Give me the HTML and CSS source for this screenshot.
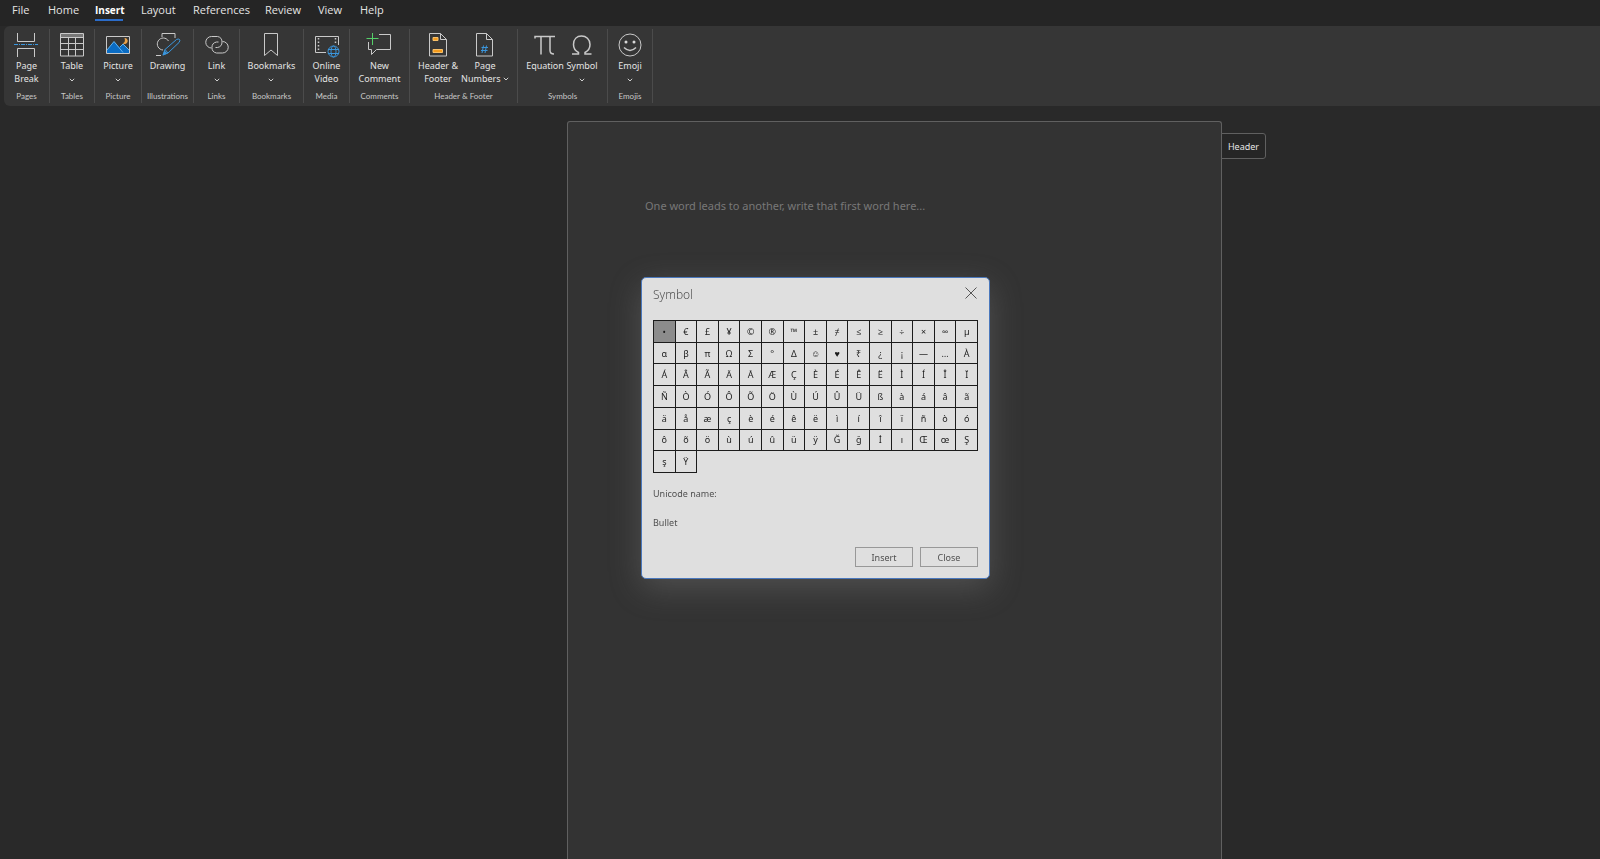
FILE: index.html
```html
<!DOCTYPE html>
<html lang="en">
<head>
<meta charset="utf-8">
<title>Document editor</title>
<link rel="stylesheet" href="styles.css">
</head>
<body>
<div class="app">
  <nav class="menu" aria-label="Main menu">
    <button class="menu-item menu-file">File</button>
    <button class="menu-item menu-home">Home</button>
    <button class="menu-item menu-insert active">Insert</button>
    <button class="menu-item menu-layout">Layout</button>
    <button class="menu-item menu-refs">References</button>
    <button class="menu-item menu-review">Review</button>
    <button class="menu-item menu-view">View</button>
    <button class="menu-item menu-help">Help</button>
  </nav>

  <div class="ribbon" role="toolbar" aria-label="Insert">
    <section class="group g-45">
      <div class="tools"><button class="tool">
        <svg class="icon" viewBox="0 0 24 24"><path d="M3.500 0v8.500h17V0M3.500 24v-8.500h17V24"/><path class="blue" stroke-dasharray="4 1 1 1" d="M0 11.500h24"/></svg>
        <span>Page<br>Break</span></button></div>
      <h2 class="caption">Pages</h2>
    </section>
    <section class="group g-44">
      <div class="tools"><button class="tool">
        <svg class="icon" viewBox="0 0 24 24"><path d="M.5.500h23v22.500H.5zM.5 4.500h23M.5 10.500h23M.5 16.500h23M8.500 4.500v18.500M15.500 4.500v18.500"/><path class="dim" d="M1 2.500h22"/></svg>
        <span>Table</span><svg class="chev" viewBox="0 0 6 4"><path d="M.8.800 3 3 5.200.800"/></svg></button></div>
      <h2 class="caption">Tables</h2>
    </section>
    <section class="group g-46">
      <div class="tools"><button class="tool">
        <svg class="icon" viewBox="0 0 24 24"><path class="fill-blue" d="M1 17 8 8.500l5.500 6L17 11l6 6v3H1z"/><path class="sky" d="M1 17 8 8.500l9 11M14 14l3-3 6 6"/><path d="M.5 3.500h23v17H.5z"/><path class="fill-orange" d="M18.500 5a3 3 0 1 1-2 5c2 0 3-2 2-5z"/></svg>
        <span>Picture</span><svg class="chev" viewBox="0 0 6 4"><path d="M.8.800 3 3 5.200.800"/></svg></button></div>
      <h2 class="caption">Picture</h2>
    </section>
    <section class="group g-51">
      <div class="tools"><button class="tool">
        <svg class="icon" viewBox="0 0 24 24"><path d="M6 4V.5h13V5M12.500 8A6 6 0 1 0 7 17M0 22.500h5"/><path class="blue" d="m7 22 2-5.500L20.500 6.500q2-1 3 0t-.5 3L12 20z M9 16.500l3 3.500"/><path class="fill-sky" d="m6.500 22.500 2-5 3 3z"/></svg>
        <span>Drawing</span></button></div>
      <h2 class="caption">Illustrations</h2>
    </section>
    <section class="group g-45">
      <div class="tools"><button class="tool">
        <svg class="icon" viewBox="0 0 24 24"><path d="M6.500 15A5.700 5.700 0 0 1 6.500 3.500h6a5.600 5.600 0 0 1 0 11H10.500"/><path d="M17.500 8.500a5.700 5.700 0 0 1 0 11.500h-6a5.600 5.600 0 0 1 0-11H13.500"/></svg>
        <span>Link</span><svg class="chev" viewBox="0 0 6 4"><path d="M.8.800 3 3 5.200.800"/></svg></button></div>
      <h2 class="caption">Links</h2>
    </section>
    <section class="group g-63">
      <div class="tools"><button class="tool">
        <svg class="icon" viewBox="0 0 24 24"><path d="M5.500.500h13v22L12 17l-6.500 5.500z"/></svg>
        <span>Bookmarks</span><svg class="chev" viewBox="0 0 6 4"><path d="M.8.800 3 3 5.200.800"/></svg></button></div>
      <h2 class="caption">Bookmarks</h2>
    </section>
    <section class="group g-45">
      <div class="tools"><button class="tool">
        <svg class="icon" viewBox="0 0 24 24"><path d="M11 19.500H.5v-16h23V12"/><path class="thick" stroke-dasharray="1.500 2" d="M3.500 5v14M20.500 5v6"/><circle class="disc" cx="18.500" cy="18.500" r="6.500"/><g class="blue"><circle cx="18.500" cy="18.500" r="5.500"/><ellipse cx="18.500" cy="18.500" rx="2.500" ry="5.500"/><path d="M13 16.500h11M13 20.500h11"/></g></svg>
        <span>Online<br>Video</span></button></div>
      <h2 class="caption">Media</h2>
    </section>
    <section class="group g-59">
      <div class="tools"><button class="tool">
        <svg class="icon" viewBox="0 0 24 24"><path d="M12 1.500h11.500v15H9.500L4.500 21.500v-5h-3V9"/><path class="green" d="M5.500 0v12M-.5 5.500H11.500"/></svg>
        <span>New<br>Comment</span></button></div>
      <h2 class="caption">Comments</h2>
    </section>
    <section class="group g-107">
      <div class="tools">
        <button class="tool t-48">
        <svg class="icon" viewBox="0 0 24 24"><path d="M3.500.500h11l6 6v16.500h-17zM14.500.500v6h6"/><path class="orange" d="M7 4.500h5v3H7zM7 16.500h9.500v3H7z"/></svg>
        <span>Header &amp;<br>Footer</span></button>
        <button class="tool t-46">
        <svg class="icon" viewBox="0 0 24 24"><path d="M3.500.500h10l6 6v16.500h-16zM13.500.500v6h6"/><path class="blue" d="M10.500 12.500l-1.500 7.500M13.500 12.500l-1.500 7.500M8.500 14.500h6.500M8 17.500h6.500"/></svg>
        <span>Page<br>Numbers <svg class="chev inline" viewBox="0 0 6 4"><path d="M.8.800 3 3 5.200.800"/></svg></span></button>
      </div>
      <h2 class="caption">Header &amp; Footer</h2>
    </section>
    <section class="group g-89">
      <div class="tools">
        <button class="tool t-39">
        <svg class="icon" viewBox="0 0 24 24"><path class="thick" d="M2 5.500V3.500h20M8 3.500v18M17 3.500v14q0 3.500 4 3.500"/></svg>
        <span>Equation</span></button>
        <button class="tool t-35">
        <svg class="icon" viewBox="0 0 24 24"><path class="thick" d="M2 21h6.500v-1.500Q3.500 17 3.500 11.500C3.500 6 7 3 11.500 3s8.500 3 8.500 8.500Q20 17 15 19.500V21h6.500"/></svg>
        <span>Symbol</span><svg class="chev" viewBox="0 0 6 4"><path d="M.8.800 3 3 5.200.800"/></svg></button>
      </div>
      <h2 class="caption">Symbols</h2>
    </section>
    <section class="group g-44">
      <div class="tools"><button class="tool">
        <svg class="icon" viewBox="0 0 24 24"><circle cx="12" cy="12" r="11"/><path class="thick" d="M6 14.500q6 6 12 0"/><circle class="eye" cx="8" cy="9" r="1.500"/><circle class="eye" cx="16" cy="9" r="1.500"/></svg>
        <span>Emoji</span><svg class="chev" viewBox="0 0 6 4"><path d="M.8.800 3 3 5.200.800"/></svg></button></div>
      <h2 class="caption">Emojis</h2>
    </section>
  </div>

  <main class="canvas">
    <article class="page">
      <p class="placeholder">One word leads to another, write that first word here...</p>
      <button class="header-tab">Header</button>
    </article>
  </main>
</div>

<div class="overlay">
  <div class="dialog" role="dialog" aria-labelledby="dialog-title">
    <header class="dialog-head">
      <h1 class="dialog-title" id="dialog-title">Symbol</h1>
      <button class="dismiss" aria-label="Close dialog"><svg viewBox="0 0 12 12"><path d="M.5.500l11 11M11.500.500l-11 11"/></svg></button>
    </header>
    <div class="symbols" id="symbols"></div>
    <p class="note">Unicode name:</p>
    <p class="note">Bullet</p>
    <footer class="actions">
      <button class="action">Insert</button>
      <button class="action">Close</button>
    </footer>
  </div>
</div>
<script src="symbols.js"></script>
</body>
</html>
```
FILE: symbols.js
```js
const symbols = "•€£¥©®™±≠≤≥÷×∞µ" +
  "αβπΩΣ°Δ☺♥₹¿¡—…À" +
  "ÁÂÃÄÅÆÇÈÉÊËÌÍÎÏ" +
  "ÑÒÓÔÕÖÙÚÛÜßàáâã" +
  "äåæçèéêëìíîïñòó" +
  "ôõöùúûüÿĞğİıŒœŞ" +
  "şŸ";
const grid = document.getElementById("symbols");
for (const [index, symbol] of [...symbols].entries()) {
  const cell = document.createElement("button");
  cell.className = index === 0 ? "cell selected" : "cell";
  cell.textContent = symbol;
  grid.append(cell);
}
```
FILE: styles.css
```css
* {
  box-sizing: border-box;
}

body {
  margin: 0;
  background: #292929;
  color: #e4e4e4;
  font-family: "Noto Sans", "Open Sans", sans-serif;
  font-size: 9px;
}

button {
  margin: 0;
  padding: 0;
  border: 0;
  background: none;
  color: inherit;
  font: inherit;
}

h1,
h2,
p {
  margin: 0;
  font-weight: 400;
}

.app {
  display: flex;
  flex-direction: column;
  height: 100vh;
  overflow: hidden;
}

.menu {
  display: flex;
  gap: 18px;
  padding: 0 12px;
  height: 26px;
  background: #252525;
  font-family: "Open Sans", "Noto Sans", sans-serif;
  font-size: 11px;
}

.menu-item {
  height: 21px;
  line-height: 19px;
  border-bottom: 2px solid transparent;
  text-align: left;
  white-space: nowrap;
}

.menu-item.active {
  border-color: #2b6cc9;
  color: #fff;
  font-size: 10px;
  font-weight: 700;
  line-height: 20px;
}

.menu-file { width: 18px; }
.menu-home { width: 29px; }
.menu-insert { width: 28px; }
.menu-layout { width: 34px; }
.menu-refs { width: 54px; }
.menu-review { width: 35px; }
.menu-view { width: 24px; }
.menu-help { width: 24px; }

.ribbon {
  display: flex;
  margin-left: 4px;
  padding: 3px 0;
  background: #363636;
  border-radius: 6px 0 0 6px;
}

.group {
  display: flex;
  flex-direction: column;
  justify-content: space-between;
  box-sizing: content-box;
  height: 74px;
  border-right: 1px solid #4b4b4b;
}

.g-44 { width: 44px; }
.g-45 { width: 45px; }
.g-46 { width: 46px; }
.g-51 { width: 51px; }
.g-59 { width: 59px; }
.g-63 { width: 63px; }
.g-89 { width: 89px; }
.g-107 { width: 107px; }

.tools {
  display: flex;
  justify-content: center;
  padding-top: 4px;
}

.tool {
  display: flex;
  flex-direction: column;
  align-items: center;
  line-height: 13px;
  white-space: nowrap;
}

.t-35 { width: 35px; }
.t-39 { width: 39px; }
.t-48 { width: 48px; }
.t-46 {
  width: 46px;
  margin-right: 5px;
}

.icon {
  width: 24px;
  height: 24px;
  margin-bottom: 2px;
  overflow: visible;
  fill: none;
  stroke: #c9c9c9;
}

.blue { stroke: #3a96dd; }
.sky { stroke: #61b4f0; }
.green { stroke: #55d069; }
.dim { stroke: #777; stroke-width: 3; }
.thick { stroke-width: 1.5; }
.orange { stroke: #f7c06a; fill: #f59b1c; }
.fill-blue { fill: #0a6cc4; stroke: none; }
.fill-sky { fill: #3a96dd; stroke: none; }
.fill-orange { fill: #e8a24a; stroke: none; }
.disc { fill: #363636; stroke: none; }
.eye { fill: #d8d8d8; stroke: none; }

.chev {
  width: 6px;
  height: 4px;
  margin-top: 6px;
  fill: none;
  stroke: #d0d0d0;
}

.chev.inline {
  margin: 0 0 1px;
}

.caption {
  color: #c8c8c8;
  font-family: Lato, "Open Sans", sans-serif;
  font-size: 8px;
  line-height: 14px;
  text-align: center;
  white-space: nowrap;
}

.canvas {
  display: flex;
  flex: 1;
  justify-content: center;
  padding: 15px 0 0 189px;
}

.page {
  position: relative;
  width: 655px;
  padding: 76px 77px;
  background: #333;
  border: 1px solid #606060;
  border-bottom: 0;
  border-radius: 3px 3px 0 0;
}

.placeholder {
  color: #787878;
  font-size: 11px;
  line-height: 16px;
}

.header-tab {
  position: absolute;
  top: 11px;
  left: 100%;
  width: 45px;
  height: 26px;
  background: #262626;
  border: 1px solid #606060;
  border-radius: 0 3px 3px 0;
}

.overlay {
  position: fixed;
  inset: 0;
  display: grid;
  place-items: center;
  padding: 0 0 3px 31px;
}

.dialog {
  width: 349px;
  padding: 9px 11px 11px;
  background: #dfdfdf;
  border: 1px solid #4a78bd;
  border-radius: 5px;
  box-shadow: 0 9px 32px rgba(150, 150, 150, 0.3);
  color: #505050;
}

.dialog-head {
  display: flex;
  justify-content: space-between;
  margin-bottom: 17px;
}

.dialog-title {
  font-size: 12px;
  font-weight: 300;
  line-height: 16px;
}

.dismiss {
  width: 13px;
  height: 12px;
}

.dismiss svg {
  display: block;
  width: 12px;
  height: 12px;
  fill: none;
  stroke: #555;
}

.symbols {
  display: grid;
  grid-template-columns: repeat(15, 1fr);
  grid-template-rows: repeat(7, 1fr);
  aspect-ratio: 324 / 152;
  margin-right: 1px;
}

.cell {
  min-width: 0;
  min-height: 0;
  margin: 0 -1px -1px 0;
  padding-top: 1px;
  border: 1px solid #1c1c1c;
  color: #1c1c1c;
  line-height: 18px;
}

.cell.selected {
  background: #8c8c8c;
}

.note {
  margin-top: 15px;
  line-height: 14px;
}

.actions {
  display: flex;
  justify-content: flex-end;
  gap: 7px;
  margin-top: 17px;
}

.action {
  width: 58px;
  height: 20px;
  border: 1px solid #989898;
}
```
